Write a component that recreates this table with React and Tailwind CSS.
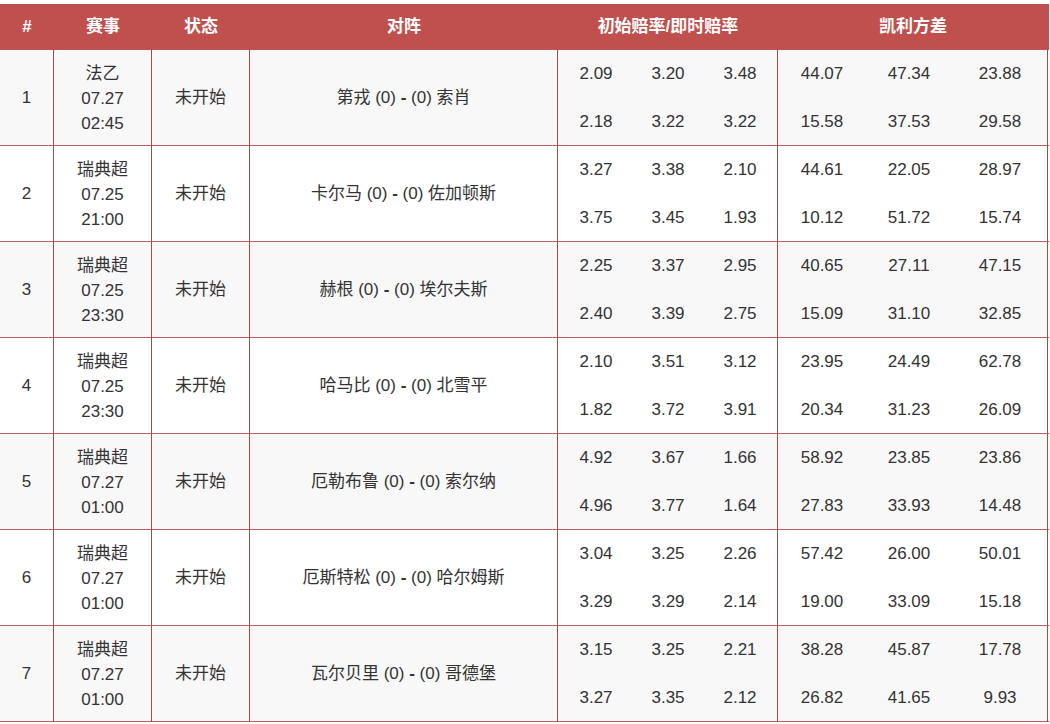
const ROWS = [
  { league: '法乙', date: '07.27', time: '02:45', home: '第戎', away: '索肖', odds: [['2.09', '3.20', '3.48'], ['2.18', '3.22', '3.22']], kelly: [['44.07', '47.34', '23.88'], ['15.58', '37.53', '29.58']] },
  { league: '瑞典超', date: '07.25', time: '21:00', home: '卡尔马', away: '佐加顿斯', odds: [['3.27', '3.38', '2.10'], ['3.75', '3.45', '1.93']], kelly: [['44.61', '22.05', '28.97'], ['10.12', '51.72', '15.74']] },
  { league: '瑞典超', date: '07.25', time: '23:30', home: '赫根', away: '埃尔夫斯', odds: [['2.25', '3.37', '2.95'], ['2.40', '3.39', '2.75']], kelly: [['40.65', '27.11', '47.15'], ['15.09', '31.10', '32.85']] },
  { league: '瑞典超', date: '07.25', time: '23:30', home: '哈马比', away: '北雪平', odds: [['2.10', '3.51', '3.12'], ['1.82', '3.72', '3.91']], kelly: [['23.95', '24.49', '62.78'], ['20.34', '31.23', '26.09']] },
  { league: '瑞典超', date: '07.27', time: '01:00', home: '厄勒布鲁', away: '索尔纳', odds: [['4.92', '3.67', '1.66'], ['4.96', '3.77', '1.64']], kelly: [['58.92', '23.85', '23.86'], ['27.83', '33.93', '14.48']] },
  { league: '瑞典超', date: '07.27', time: '01:00', home: '厄斯特松', away: '哈尔姆斯', odds: [['3.04', '3.25', '2.26'], ['3.29', '3.29', '2.14']], kelly: [['57.42', '26.00', '50.01'], ['19.00', '33.09', '15.18']] },
  { league: '瑞典超', date: '07.27', time: '01:00', home: '瓦尔贝里', away: '哥德堡', odds: [['3.15', '3.25', '2.21'], ['3.27', '3.35', '2.12']], kelly: [['38.28', '45.87', '17.78'], ['26.82', '41.65', '9.93']] },
];

const COLS = 'grid grid-cols-[54px_98px_98px_308px_220px_270px]';

function Numbers({ lines, cols }) {
  return (
    <div className="flex flex-col">
      {lines.map((line, i) => (
        <div key={i} className={`grid ${cols} h-[48px] items-center`}>
          {line.map((v, j) => (
            <div key={j} className="text-center">{v}</div>
          ))}
        </div>
      ))}
    </div>
  );
}

export default function App() {
  return (
    <div
      className="w-[1050px] h-[724px] bg-white pt-[4px] text-[17px] text-[#333]"
      style={{ fontFamily: '"Liberation Sans", Arial, "Noto Sans CJK SC", sans-serif' }}
    >
      <div className="w-[1049px]">
        <div className={`${COLS} h-[46px] items-center bg-[#c0504d] text-white font-bold text-[17px]`}>
          <div className="text-center">#</div>
          <div className="text-center">赛事</div>
          <div className="text-center">状态</div>
          <div className="text-center">对阵</div>
          <div className="text-center">初始赔率/即时赔率</div>
          <div className="text-center">凯利方差</div>
        </div>

        {ROWS.map((r, i) => (
          <div
            key={i}
            className={`${COLS} h-[96px] border-b border-[#b5625f] ${i % 2 === 0 ? 'bg-[#f8f8f8]' : 'bg-white'}`}
          >
            <div className="flex items-center justify-center border-r border-[#94504f]">{i + 1}</div>
            <div className="flex flex-col items-center justify-center leading-[25px] border-r border-[#94504f]">
              <span>{r.league}</span>
              <span>{r.date}</span>
              <span>{r.time}</span>
            </div>
            <div className="flex items-center justify-center border-r border-[#94504f]">未开始</div>
            <div className="flex items-center justify-center whitespace-pre border-r border-[#94504f]">
              <span>{r.home} (0) </span>
              <span className="font-bold">-</span>
              <span> (0) {r.away}</span>
            </div>
            <div className="border-r border-[#94504f] pl-[2px]">
              <Numbers lines={r.odds} cols="grid-cols-[72px_72px_72px]" />
            </div>
            <div className="border-r border-[#94504f]">
              <Numbers lines={r.kelly} cols="grid-cols-[88px_86px_96px]" />
            </div>
          </div>
        ))}
      </div>
    </div>
  );
}
